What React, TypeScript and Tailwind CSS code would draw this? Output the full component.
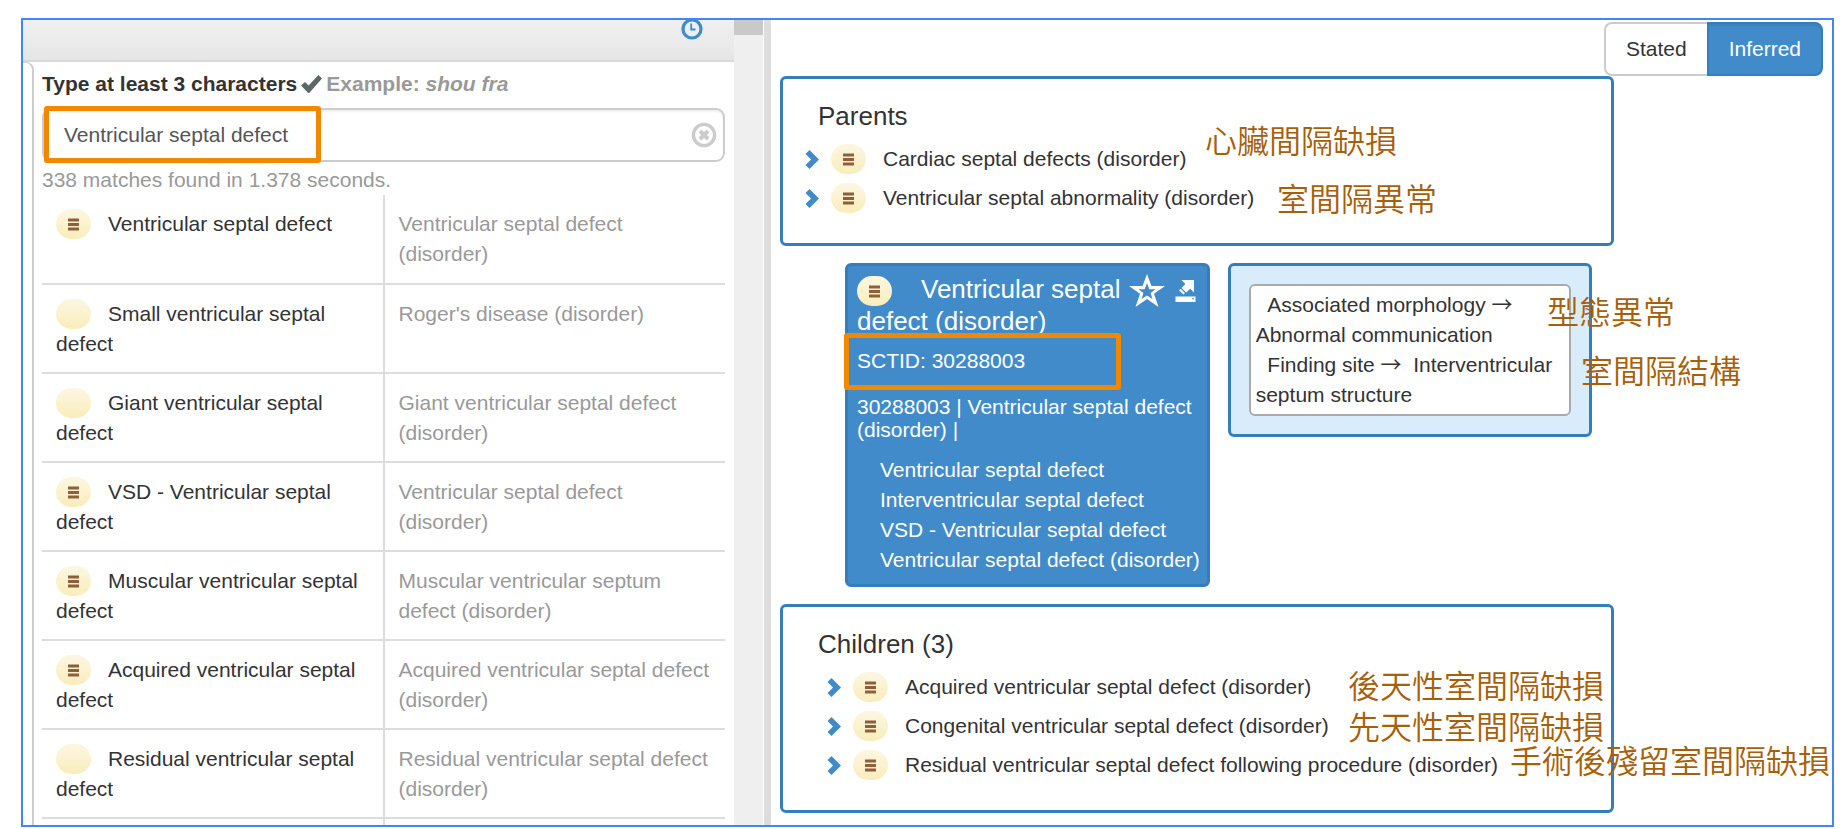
import { clsx } from "clsx";

type Match = { term: string; concept: string; primitive?: boolean };

const matches: Match[] = [
  { term: "Ventricular septal defect", concept: "Ventricular septal defect (disorder)", primitive: true },
  { term: "Small ventricular septal defect", concept: "Roger's disease (disorder)" },
  { term: "Giant ventricular septal defect", concept: "Giant ventricular septal defect (disorder)" },
  { term: "VSD - Ventricular septal defect", concept: "Ventricular septal defect (disorder)", primitive: true },
  { term: "Muscular ventricular septal defect", concept: "Muscular ventricular septum defect (disorder)", primitive: true },
  { term: "Acquired ventricular septal defect", concept: "Acquired ventricular septal defect (disorder)", primitive: true },
  { term: "Residual ventricular septal defect", concept: "Residual ventricular septal defect (disorder)" },
];

const parents = ["Cardiac septal defects (disorder)", "Ventricular septal abnormality (disorder)"];

const children = [
  "Acquired ventricular septal defect (disorder)",
  "Congenital ventricular septal defect (disorder)",
  "Residual ventricular septal defect following procedure (disorder)",
];

const synonyms = [
  "Ventricular septal defect",
  "Interventricular septal defect",
  "VSD - Ventricular septal defect",
  "Ventricular septal defect (disorder)",
];

// translations floating over the concept pane
const notes = [
  { text: "心臟間隔缺損", place: "left-[434px] top-[99px]" },
  { text: "室間隔異常", place: "left-[506px] top-[157px]" },
  { text: "型態異常", place: "left-[776px] top-[270px]" },
  { text: "室間隔結構", place: "left-[810px] top-[329px]" },
  { text: "後天性室間隔缺損", place: "left-[577px] top-[644px]" },
  { text: "先天性室間隔缺損", place: "left-[577px] top-[685px]" },
  { text: "手術後殘留室間隔缺損", place: "left-[739px] top-[719px]" },
];

export default function App() {
  return (
    <div className="h-screen bg-white pt-[18px] pr-[13px] pb-[2px] pl-[21px] font-['Liberation_Sans',Arial,sans-serif] text-[21px] leading-[30px] text-[#333]">
      <main className="grid h-full grid-cols-[748fr_1061fr] overflow-hidden border-2 border-[#4285f4]">
        <SearchPane />
        <ConceptPane />
      </main>
    </div>
  );
}

function SearchPane() {
  return (
    <section className="flex min-h-0 overflow-hidden">
      <div className="flex min-w-0 flex-1 flex-col">
        <header className="flex h-[42px] shrink-0 justify-end border-b-2 border-[#d9d9d9] bg-linear-to-b from-[#f0f0f0] to-[#e6e6e6] pr-[31px]">
          <button type="button" aria-label="History" className="-mt-0.5 h-[22px]">
            <ClockIcon className="size-[22px]" />
          </button>
        </header>
        <div className="flex min-h-0 flex-1 overflow-hidden">
          <div className="w-[11px] shrink-0 rounded-tr-[8px] border-t border-r-2 border-[#ccc]" />
          <div className="min-w-0 flex-1 pt-[7px] pr-[9px] pl-[8px]">
            <label htmlFor="search" className="flex items-center font-bold">
              Type at least 3 characters
              <CheckIcon className="mx-1 h-[18px] w-[21px]" />
              <span className="text-[#999]">
                Example: <em>shou fra</em>
              </span>
            </label>
            <div className="relative mt-[9px] flex h-[54px] items-center rounded-[9px] border-2 border-[#ccc] pr-[6px] pl-5 shadow-[inset_0_2px_2px_rgba(0,0,0,0.06)]">
              <input
                id="search"
                type="text"
                defaultValue="Ventricular septal defect"
                className="min-w-0 flex-1 bg-transparent text-[#555] outline-none"
              />
              <button type="button" aria-label="Clear search">
                <ClearIcon className="size-[26px]" />
              </button>
              <div className="pointer-events-none absolute -top-1 left-0 h-[57px] w-[277px] rounded-[3px] border-[5px] border-[#f08800]" />
            </div>
            <p className="mt-[3px] text-[#999]">338 matches found in 1.378 seconds.</p>
            <table className="w-full table-fixed border-collapse">
              <tbody>
                {matches.map((m) => (
                  <tr key={m.term} className="h-[89px] border-b-2 border-[#ddd] align-top">
                    <td className="border-r-2 border-[#ddd] px-[14px] pt-[14px]">
                      <Badge primitive={m.primitive} className="mr-[17px] align-top" />
                      {m.term}
                    </td>
                    <td className="px-[14px] pt-[14px] text-[#999]">{m.concept}</td>
                  </tr>
                ))}
                <tr className="h-[89px]">
                  <td className="border-r-2 border-[#ddd]" />
                  <td />
                </tr>
              </tbody>
            </table>
          </div>
        </div>
      </div>
      <div className="w-[29px] shrink-0 bg-[#efefef]">
        <div className="h-[15px] bg-[#c9c9c9]" />
      </div>
      <div className="w-2 shrink-0 border-l border-white bg-[#ddd]" />
    </section>
  );
}

function ConceptPane() {
  return (
    <section className="relative min-w-0 px-[9px] pt-[2px]">
      <div className="flex h-[54px] justify-end">
        <button type="button" className="rounded-l-[8px] border-2 border-r-0 border-[#ccc] bg-white px-5">
          Stated
        </button>
        <button
          type="button"
          className="rounded-r-[8px] border-2 border-[#357ebd] bg-[#428bca] px-5 text-white shadow-[inset_0_2px_1px_rgba(0,0,0,0.06)]"
        >
          Inferred
        </button>
      </div>

      <div className="w-4/5">
        <RelativesBox title="Parents" items={parents} />
        <div className="grid grid-cols-2 items-start gap-[18px] py-[17px] pr-[22px] pl-[65px]">
          <ConceptCard />
          <Attributes />
        </div>
        <RelativesBox title="Children (3)" items={children} nested />
      </div>

      {notes.map((n) => (
        <span
          key={n.text}
          className={clsx(
            "pointer-events-none absolute font-['Noto_Sans_CJK_TC',sans-serif] text-[32px] leading-[40px] font-[350] whitespace-nowrap text-[#a85f0a]",
            n.place,
          )}
        >
          {n.text}
        </span>
      ))}
    </section>
  );
}

function RelativesBox({ title, items, nested }: { title: string; items: string[]; nested?: boolean }) {
  return (
    <div className="rounded-[6px] border-[3px] border-[#357ebd] bg-white pt-5 pb-[30px]">
      <h2 className="pl-[35px] text-[26px] leading-[34px]">{title}</h2>
      <ul className={clsx("mt-[11px] flex flex-col gap-[9px]", nested ? "pl-[44px]" : "pl-[22px]")}>
        {items.map((item) => (
          <li key={item} className="flex items-center whitespace-nowrap">
            <button type="button" aria-label={`Expand ${item}`}>
              <ChevronIcon className="h-[19px] w-[14px]" />
            </button>
            <Badge primitive className="mr-[17px] ml-3" />
            {item}
          </li>
        ))}
      </ul>
    </div>
  );
}

function ConceptCard() {
  return (
    <article className="rounded-[6px] border-[3px] border-[#357ebd] bg-[#428bca] pt-2 pb-[9px] pl-[9px] text-white">
      <div className="float-right mr-[11px] flex items-center gap-[10px]">
        <button type="button" aria-label="Add to favorites">
          <StarIcon className="h-[33px] w-[36px]" />
        </button>
        <button type="button" aria-label="Export concept">
          <ExportIcon className="h-[22px] w-[21px]" />
        </button>
      </div>
      <h1 className="text-[26px] leading-[30px]">
        <Badge primitive className="mr-[29px] align-middle" />
        Ventricular septal defect (disorder)
      </h1>
      <div className="relative mt-[10px]">
        SCTID: 30288003
        <div className="pointer-events-none absolute -top-[13px] -left-[13px] h-[57px] w-[277px] rounded-[3px] border-[5px] border-[#f08800]" />
      </div>
      <p className="mt-[19px] leading-[23px]">30288003 | Ventricular septal defect (disorder) |</p>
      <ul className="mt-[14px] pl-[23px] whitespace-nowrap">
        {synonyms.map((s) => (
          <li key={s}>{s}</li>
        ))}
      </ul>
    </article>
  );
}

function Attributes() {
  return (
    <div className="rounded-[6px] border-[3px] border-[#357ebd] bg-[#d9ecfc] p-[18px]">
      <div className="rounded-[6px] border-2 border-[#aaa] bg-white px-[5px] py-1">
        <p>
          {"\u00a0\u00a0"}Associated morphology <Arrow />
          {"\u00a0"} Abnormal communication
        </p>
        <p>
          {"\u00a0\u00a0"}Finding site <Arrow />
          {"\u00a0"} Interventricular septum structure
        </p>
      </div>
    </div>
  );
}

function Arrow() {
  return <span className="font-['Noto_Sans_CJK_TC',sans-serif] leading-none">→</span>;
}

function Badge({ primitive, className }: { primitive?: boolean; className?: string }) {
  return (
    <span
      className={clsx(
        "inline-flex h-[30px] w-[35px] shrink-0 items-center justify-center rounded-[15px] bg-linear-to-b from-[#fcf7e2] to-[#f9edbb]",
        className,
      )}
    >
      {primitive && (
        <svg viewBox="0 0 11 13" className="h-[13px] w-[11px]" fill="#8f5f3c" aria-hidden>
          <rect x="0" y="0.5" width="11" height="3" />
          <rect x="0" y="5" width="11" height="3" />
          <rect x="0" y="9.5" width="11" height="3" />
        </svg>
      )}
    </span>
  );
}

function ChevronIcon({ className }: { className?: string }) {
  return (
    <svg viewBox="0 0 14 19" className={className} fill="#428bca" aria-hidden>
      <path d="M4.5 0 14 9.5 4.5 19 .5 15 6 9.5.5 4Z" />
    </svg>
  );
}

function CheckIcon({ className }: { className?: string }) {
  return (
    <svg viewBox="0 0 21 18" className={className} fill="#5c6865" aria-hidden>
      <path d="M0 10.5 4 7 7.6 10.6 17.4 0 21 3.4 8.2 18H7.2Z" />
    </svg>
  );
}

function ClockIcon({ className }: { className?: string }) {
  return (
    <svg viewBox="0 0 22 22" className={className} fill="none" stroke="#428bca" aria-hidden>
      <circle cx="11" cy="11" r="9" strokeWidth="3.2" />
      <path d="M10.2 5.5V11.5H14.5" strokeWidth="1.8" />
    </svg>
  );
}

function ClearIcon({ className }: { className?: string }) {
  return (
    <svg viewBox="0 0 26 26" className={className} fill="none" stroke="#ccc" aria-hidden>
      <circle cx="13" cy="13" r="10.6" strokeWidth="3.4" />
      <path d="M9 9 17 17M17 9 9 17" strokeWidth="4" />
    </svg>
  );
}

function StarIcon({ className }: { className?: string }) {
  return (
    <svg viewBox="0 0 36 33" className={className} fill="#fff" fillRule="evenodd" aria-hidden>
      <path d="M18 0 22.4 12H36L25 19.8 29.5 33 18 25 6.5 33 11 19.8 0 12H13.6ZM18 9 15.6 15.2H9.4L14.4 19 12.6 25 18 21.4 23.4 25 21.6 19 26.6 15.2H20.4Z" />
    </svg>
  );
}

function ExportIcon({ className }: { className?: string }) {
  return (
    <svg viewBox="0 0 21 22" className={className} fill="#fff" aria-hidden>
      <path d="M6.5 0H19V12.5L15.2 8.8 11.2 12.6 6.6 8 10.4 4.1Z" />
      <path d="M5.6 8.8 10 13 8.4 14.6 4 10.3Z" />
      <path fillRule="evenodd" d="M.5 16.5H20.5V22H.5ZM17 18.2V19.2H19V18.2Z" />
    </svg>
  );
}
